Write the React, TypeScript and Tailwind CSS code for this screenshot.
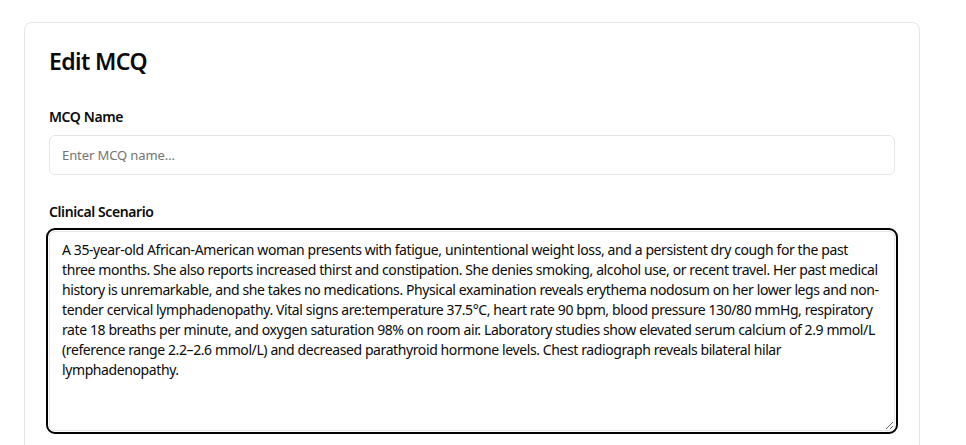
const scenario =
  "A 35-year-old African-American woman presents with fatigue, unintentional weight loss, and a persistent dry cough for the past three months. She also reports increased thirst and constipation. She denies smoking, alcohol use, or recent travel. Her past medical history is unremarkable, and she takes no medications. Physical examination reveals erythema nodosum on her lower legs and non-tender cervical lymphadenopathy. Vital signs are:temperature 37.5°C, heart rate 90 bpm, blood pressure 130/80 mmHg, respiratory rate 18 breaths per minute, and oxygen saturation 98% on room air. Laboratory studies show elevated serum calcium of 2.9 mmol/L (reference range 2.2–2.6 mmol/L) and decreased parathyroid hormone levels. Chest radiograph reveals bilateral hilar lymphadenopathy."

export default function App() {
  return (
    <div className="min-h-screen bg-white px-6 pt-[22px] font-['Noto_Sans',sans-serif] text-[#0a0a0a]">
      <div className="w-[896px] rounded-lg border border-[#e5e5e5] bg-white p-6">
        <h1 className="mb-8 text-[23px] leading-7 font-semibold tracking-[-0.6px]">Edit MCQ</h1>

        <label className="mb-2 block text-sm leading-5 font-semibold tracking-[-0.4px]">MCQ Name</label>
        <input
          type="text"
          placeholder="Enter MCQ name…"
          className="block h-10 w-full rounded-md border border-[#e5e5e5] bg-white px-3 text-[13px] tracking-[-0.1px] outline-none placeholder:text-[#737373]"
        />

        <label className="mt-[27px] mb-[9px] block text-sm leading-5 font-semibold tracking-[-0.4px]">
          Clinical Scenario
        </label>
        <textarea
          defaultValue={scenario}
          className="block h-[200px] w-full rounded-md border border-[#e5e5e5] bg-white px-3 py-2 text-sm leading-5 tracking-[-0.4px] text-[#0a0a0a] outline-2 outline-offset-1 outline-black outline-solid"
        />
      </div>
    </div>
  )
}
